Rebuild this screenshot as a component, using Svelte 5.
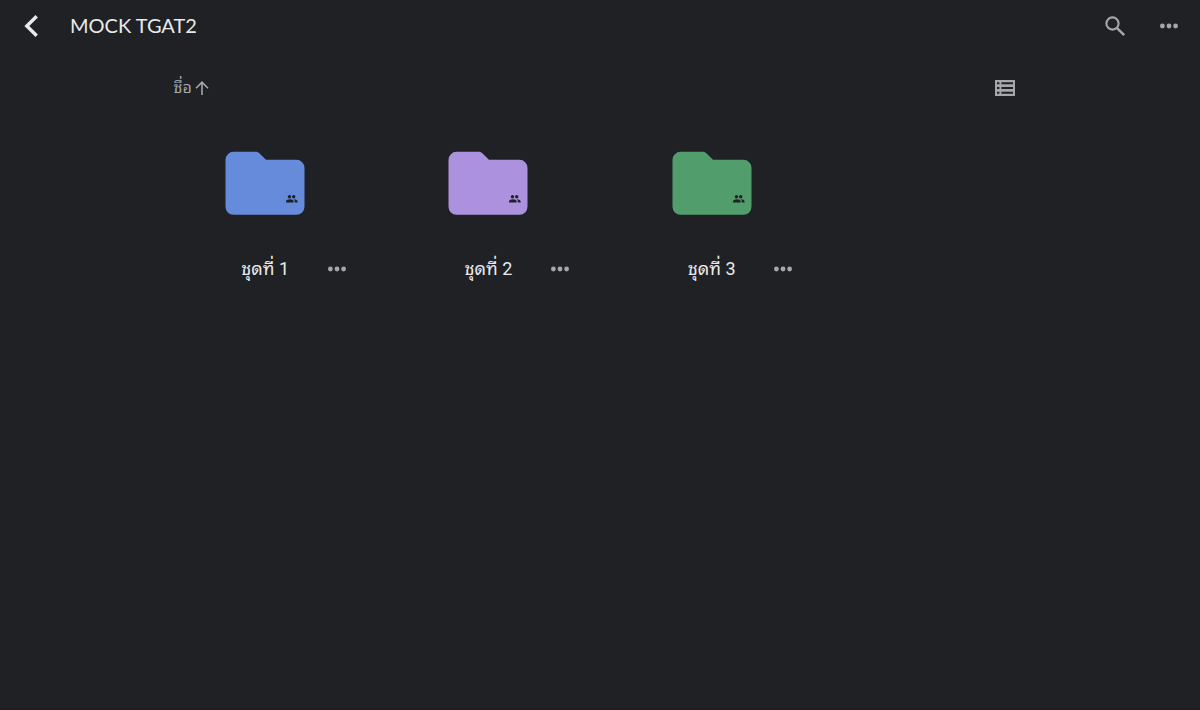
<script lang="ts">
	interface Folder {
		id: number;
		name: string;
		color: string;
	}

	const folders: Folder[] = [
		{ id: 1, name: 'ชุดที่ 1', color: '#668bdb' },
		{ id: 2, name: 'ชุดที่ 2', color: '#ac91df' },
		{ id: 3, name: 'ชุดที่ 3', color: '#519d6b' }
	];

	let ascending = $state(true);

	let sorted = $derived(
		[...folders].sort((a, b) => (ascending ? a.id - b.id : b.id - a.id))
	);
</script>

{#snippet dots()}
	<svg width="20" height="6" viewBox="0 0 20 6" fill="currentColor" aria-hidden="true">
		<circle cx="3.4" cy="3" r="2.4" />
		<circle cx="10" cy="3" r="2.4" />
		<circle cx="16.6" cy="3" r="2.4" />
	</svg>
{/snippet}

<div class="page">
	<header class="topbar">
		<button class="icon-btn back" aria-label="กลับ">
			<svg width="16" height="24" viewBox="0 0 16 24" fill="none" aria-hidden="true">
				<path d="M12.7 2.2 2.8 12l9.9 9.8" stroke="currentColor" stroke-width="3.4" />
			</svg>
		</button>
		<h1>MOCK TGAT2</h1>
		<button class="icon-btn" aria-label="ค้นหา">
			<svg width="22" height="22" viewBox="0 0 22 22" fill="none" aria-hidden="true">
				<circle cx="8.5" cy="8.5" r="6.1" stroke="currentColor" stroke-width="2.1" />
				<path d="m12.8 12.8 7.4 7.4" stroke="currentColor" stroke-width="2.5" />
			</svg>
		</button>
		<button class="icon-btn" aria-label="เพิ่มเติม">{@render dots()}</button>
	</header>

	<main>
		<div class="toolbar">
			<button class="sort" onclick={() => (ascending = !ascending)}>
				ชื่อ
				<svg
					class:flipped={!ascending}
					width="14"
					height="14"
					viewBox="0 0 14 14"
					fill="none"
					aria-hidden="true"
				>
					<path d="M7 14V1.5M1 7.2l6-6 6 6" stroke="currentColor" stroke-width="1.6" />
				</svg>
			</button>
			<button class="icon-btn" aria-label="มุมมองรายการ">
				<svg width="20" height="16" viewBox="0 0 20 16" aria-hidden="true">
					<path
						fill="currentColor"
						fill-rule="evenodd"
						d="M0 0h20v16H0zM2 2.2v2h2.4v-2zM6.4 2.2v2H18v-2zM2 7v2h2.4V7zM6.4 7v2H18V7zM2 11.8v2h2.4v-2zM6.4 11.8v2H18v-2z"
					/>
				</svg>
			</button>
		</div>

		<ul class="grid">
			{#each sorted as folder (folder.id)}
				<li class="card">
					<svg class="folder" width="80" height="64" viewBox="0 0 80 64" aria-hidden="true">
						<path
							fill={folder.color}
							d="M8.5.8h22.2c1.6 0 2.8.5 3.9 1.6l6.4 6.4h30.5a8 8 0 0 1 8 8v39a8 8 0 0 1-8 8h-63a8 8 0 0 1-8-8v-47a8 8 0 0 1 8-8z"
						/>
						<g fill="#202124">
							<circle cx="64.5" cy="45.8" r="1.7" />
							<circle cx="68.7" cy="45.8" r="1.7" />
							<path
								d="M61 51.5v-1c0-1.6 2-2.3 3.9-2.3s3.8.7 3.8 2.3v1zM69.8 51.5v-1.1c0-.9-.4-1.6-1.1-2.1 1.8.1 3.9.7 3.9 2.2v1z"
							/>
						</g>
					</svg>
					<div class="caption">
						<a href="#folder-{folder.id}">{folder.name}</a>
						<button class="icon-btn" aria-label="ตัวเลือกของ {folder.name}">
							{@render dots()}
						</button>
					</div>
				</li>
			{/each}
		</ul>
	</main>
</div>

<style>
	:global(body) {
		margin: 0;
		background: #202124;
	}

	.page {
		box-sizing: border-box;
		min-height: 100vh;
		border-bottom: 2px solid #231c1f;
		color: #e8eaed;
		font-family: Roboto, 'Noto Sans Thai Looped', Loma, Garuda, 'Noto Sans', sans-serif;
	}

	.topbar {
		display: flex;
		align-items: center;
		height: 52px;
		padding: 0 7px 0 8px;
	}

	h1 {
		flex: 1;
		margin: 0 0 0 14px;
		padding-bottom: 2px;
		font-family: Lato, 'Open Sans', sans-serif;
		font-size: 20px;
		font-weight: 400;
		line-height: 24px;
	}

	button {
		padding: 0;
		border: none;
		background: none;
		color: #a6a7ab;
		font: inherit;
		cursor: pointer;
	}

	.icon-btn {
		display: flex;
		align-items: center;
		justify-content: center;
		width: 48px;
		height: 40px;
	}

	.topbar .icon-btn + .icon-btn {
		margin: 0 0 0 6px;
	}

	.topbar .back {
		color: #e8eaed;
	}

	main {
		max-width: 893px;
		margin: 0 auto;
	}

	.toolbar {
		display: flex;
		align-items: center;
		justify-content: space-between;
		height: 72px;
		padding: 0 18px 0 20px;
	}

	.sort {
		display: flex;
		align-items: center;
		gap: 3px;
		font-size: 16px;
		line-height: 24px;
	}

	.flipped {
		transform: rotate(180deg);
	}

	.grid {
		display: grid;
		grid-template-columns: repeat(auto-fill, minmax(200px, 1fr));
		margin: 0;
		padding: 0;
		list-style: none;
	}

	.card {
		display: flex;
		flex-direction: column;
		align-items: center;
		padding: 27px 16px 24px;
	}

	.folder {
		display: block;
	}

	.caption {
		display: grid;
		grid-template-columns: 48px 1fr 48px;
		align-items: center;
		width: 100%;
		margin-top: 34px;
	}

	.caption a {
		grid-column: 2;
		color: inherit;
		font-size: 18px;
		line-height: 28px;
		text-align: center;
		text-decoration: none;
	}
</style>
